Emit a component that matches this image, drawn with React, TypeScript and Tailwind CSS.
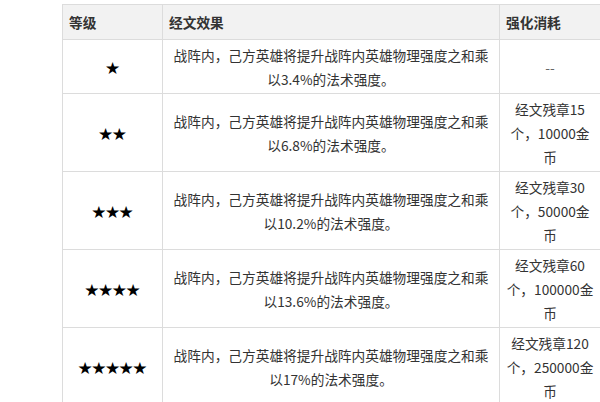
const rows = [
  { stars: 1, pct: "3.4%", cost: ["--"] },
  { stars: 2, pct: "6.8%", cost: ["经文残章15", "个，10000金", "币"] },
  { stars: 3, pct: "10.2%", cost: ["经文残章30", "个，50000金", "币"] },
  { stars: 4, pct: "13.6%", cost: ["经文残章60", "个，100000金", "币"] },
  { stars: 5, pct: "17%", cost: ["经文残章120", "个，250000金", "币"] },
];

const cell = "border border-[#dcdcdc] pt-[3px] pb-[2px] px-[6px] align-middle text-center";
const head = "border border-[#dcdcdc] bg-[#f2f2f2] py-[5px] px-[6px] text-left font-bold text-[#333]";

export default function App() {
  return (
    <div
      className="h-[402px] w-[600px] overflow-hidden bg-white pt-[4px] pl-[62px] text-[13.7px] leading-[24px] text-[#333]"
      style={{ fontFamily: '"Noto Sans CJK SC", "Noto Sans", sans-serif' }}
    >
      <table className="w-[540px] table-fixed border-collapse">
        <colgroup>
          <col className="w-[100px]" />
          <col className="w-[337px]" />
          <col className="w-[103px]" />
        </colgroup>
        <thead>
          <tr>
            <th className={head}>等级</th>
            <th className={head}>经文效果</th>
            <th className={head}>强化消耗</th>
          </tr>
        </thead>
        <tbody>
          {rows.map((r) => (
            <tr key={r.stars}>
              <td className={cell + " text-black"}>{"★".repeat(r.stars)}</td>
              <td className={cell}>
                战阵内，己方英雄将提升战阵内英雄物理强度之和乘
                <br />
                以{r.pct}的法术强度。
              </td>
              <td className={cell + " pr-[8px]"}>
                {r.cost.map((line, i) => (
                  <div key={i} className={r.cost.length === 1 ? "text-[#666]" : ""}>
                    {line}
                  </div>
                ))}
              </td>
            </tr>
          ))}
        </tbody>
      </table>
    </div>
  );
}
